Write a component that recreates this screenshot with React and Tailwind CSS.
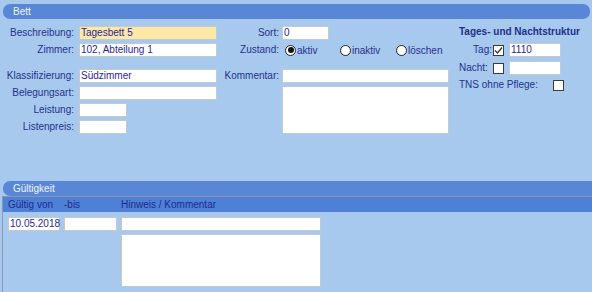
import React from "react";

const labelBase = "text-[#26308c] text-[10px] leading-[14px] shrink-0";
const label = `${labelBase} text-right`;
const boxBase = "h-[14px] border border-[#c4c8cf] text-[10px] leading-[12px] px-[1px] text-[#2a1f9c] shrink-0";
const box = `${boxBase} bg-white`;

const Field = ({ name, w, value, yellow }) => (
  <div className="flex items-center h-[14px]">
    <div className={`${label} w-[74px]`}>{name}</div>
    <div
      className={`${boxBase} ml-[5px] ${yellow ? "bg-[#fde8a6]" : "bg-white"}`}
      style={{ width: w }}
    >
      {value}
    </div>
  </div>
);

const Radio = ({ checked, text, w }) => (
  <div className="flex items-center shrink-0" style={{ width: w }}>
    <span className="w-[11px] h-[11px] rounded-full border border-[#222] bg-white flex items-center justify-center">
      {checked && <span className="w-[6px] h-[6px] rounded-full bg-[#111]" />}
    </span>
    <span className="ml-[1px] text-[10px] text-[#26308c]">{text}</span>
  </div>
);

const Check = ({ checked }) => (
  <span className="w-[11px] h-[11px] border border-[#3a3a3a] bg-white flex items-center justify-center shrink-0">
    {checked && (
      <svg width="9" height="9" viewBox="0 0 9 9">
        <path d="M1 4.5 L3.5 7 L8 1.5" fill="none" stroke="#333" strokeWidth="1.2" />
      </svg>
    )}
  </span>
);

export default function App() {
  return (
    <div
      className="w-[592px] h-[292px] bg-[#a7c9ee] overflow-hidden pt-[4px]"
      style={{ fontFamily: '"Liberation Sans", Arial, sans-serif' }}
    >
      {/* Bett header */}
      <div className="ml-[3px] mr-[2px] h-[15px] rounded-[7px] bg-[#5a87d5] text-[#eef3ff] text-[10px] pl-[10px] flex items-center">
        Bett
      </div>

      <div className="h-[162px] flex pt-[7px]">
        {/* left column */}
        <div className="w-[217px] shrink-0 flex flex-col">
          <div className="flex flex-col gap-[3px]">
            <Field name="Beschreibung:" w={138} value="Tagesbett 5" yellow />
            <Field name="Zimmer:" w={138} value="102, Abteilung 1" />
          </div>
          <div className="flex flex-col gap-[3px] mt-[12px]">
            <Field name="Klassifizierung:" w={138} value="Südzimmer" />
            <Field name="Belegungsart:" w={138} />
            <Field name="Leistung:" w={48} />
            <Field name="Listenpreis:" w={48} />
          </div>
        </div>

        {/* middle column */}
        <div className="w-[232px] shrink-0 flex flex-col">
          <div className="flex items-center h-[14px]">
            <div className={`${label} w-[62px]`}>Sort:</div>
            <div className={`${box} ml-[3px] w-[47px]`}>0</div>
          </div>
          <div className="flex items-center h-[14px] mt-[3px]">
            <div className={`${label} w-[62px]`}>Zustand:</div>
            <div className="ml-[6px] flex items-center">
              <Radio checked text="aktiv" w={55} />
              <Radio text="inaktiv" w={56} />
              <Radio text="löschen" w={52} />
            </div>
          </div>
          <div className="flex items-center h-[14px] mt-[12px]">
            <div className={`${label} w-[62px]`}>Kommentar:</div>
            <div className={`${box} ml-[3px] w-[167px]`} />
          </div>
          <div className="ml-[65px] mt-[3px] w-[167px] h-[48px] bg-white border border-[#c4c8cf]" />
        </div>

        {/* right column */}
        <div className="ml-[10px] flex flex-col">
          <div className="text-[10px] font-bold text-[#1f2f8c] leading-[12px] h-[14px]">
            Tages- und Nachtstruktur
          </div>
          <div className="flex items-center h-[14px] mt-[3px]">
            <div className={`${label} w-[33px]`}>Tag:</div>
            <span className="ml-[1px]"><Check checked /></span>
            <div className={`${box} ml-[5px] w-[52px]`}>1110</div>
          </div>
          <div className="flex items-center h-[14px] mt-[4px]">
            <div className={`${labelBase} w-[33px]`}>Nacht:</div>
            <span className="ml-[1px]"><Check /></span>
            <div className={`${box} ml-[5px] w-[52px]`} />
          </div>
          <div className="flex items-center h-[14px] mt-[3px]">
            <div className={`${labelBase} w-[94px]`}>TNS ohne Pflege:</div>
            <Check />
          </div>
        </div>
      </div>

      {/* Gültigkeit */}
      <div className="ml-[3px] h-[15px] rounded-l-[7px] bg-[#5a87d5] text-[#eef3ff] text-[10px] pl-[10px] flex items-center">
        Gültigkeit
      </div>
      <div className="ml-[2px] h-[96px] border-l border-t border-[#8c98aa]">
        <div className="h-[15px] bg-[#4f80d8] flex items-center text-[10px] text-[#1d2a8c] pl-[5px]">
          <span className="w-[56px]">Gültig von</span>
          <span className="w-[57px]">-bis</span>
          <span>Hinweis / Kommentar</span>
        </div>
        <div className="flex pl-[5px] pt-[5px] gap-[4px]">
          <div className={`${box} w-[52px]`}>10.05.2018</div>
          <div className={`${box} w-[53px]`} />
          <div className="flex flex-col gap-[3px]">
            <div className={`${box} w-[200px]`} />
            <div className="w-[200px] h-[53px] bg-white border border-[#c4c8cf]" />
          </div>
        </div>
      </div>
    </div>
  );
}
